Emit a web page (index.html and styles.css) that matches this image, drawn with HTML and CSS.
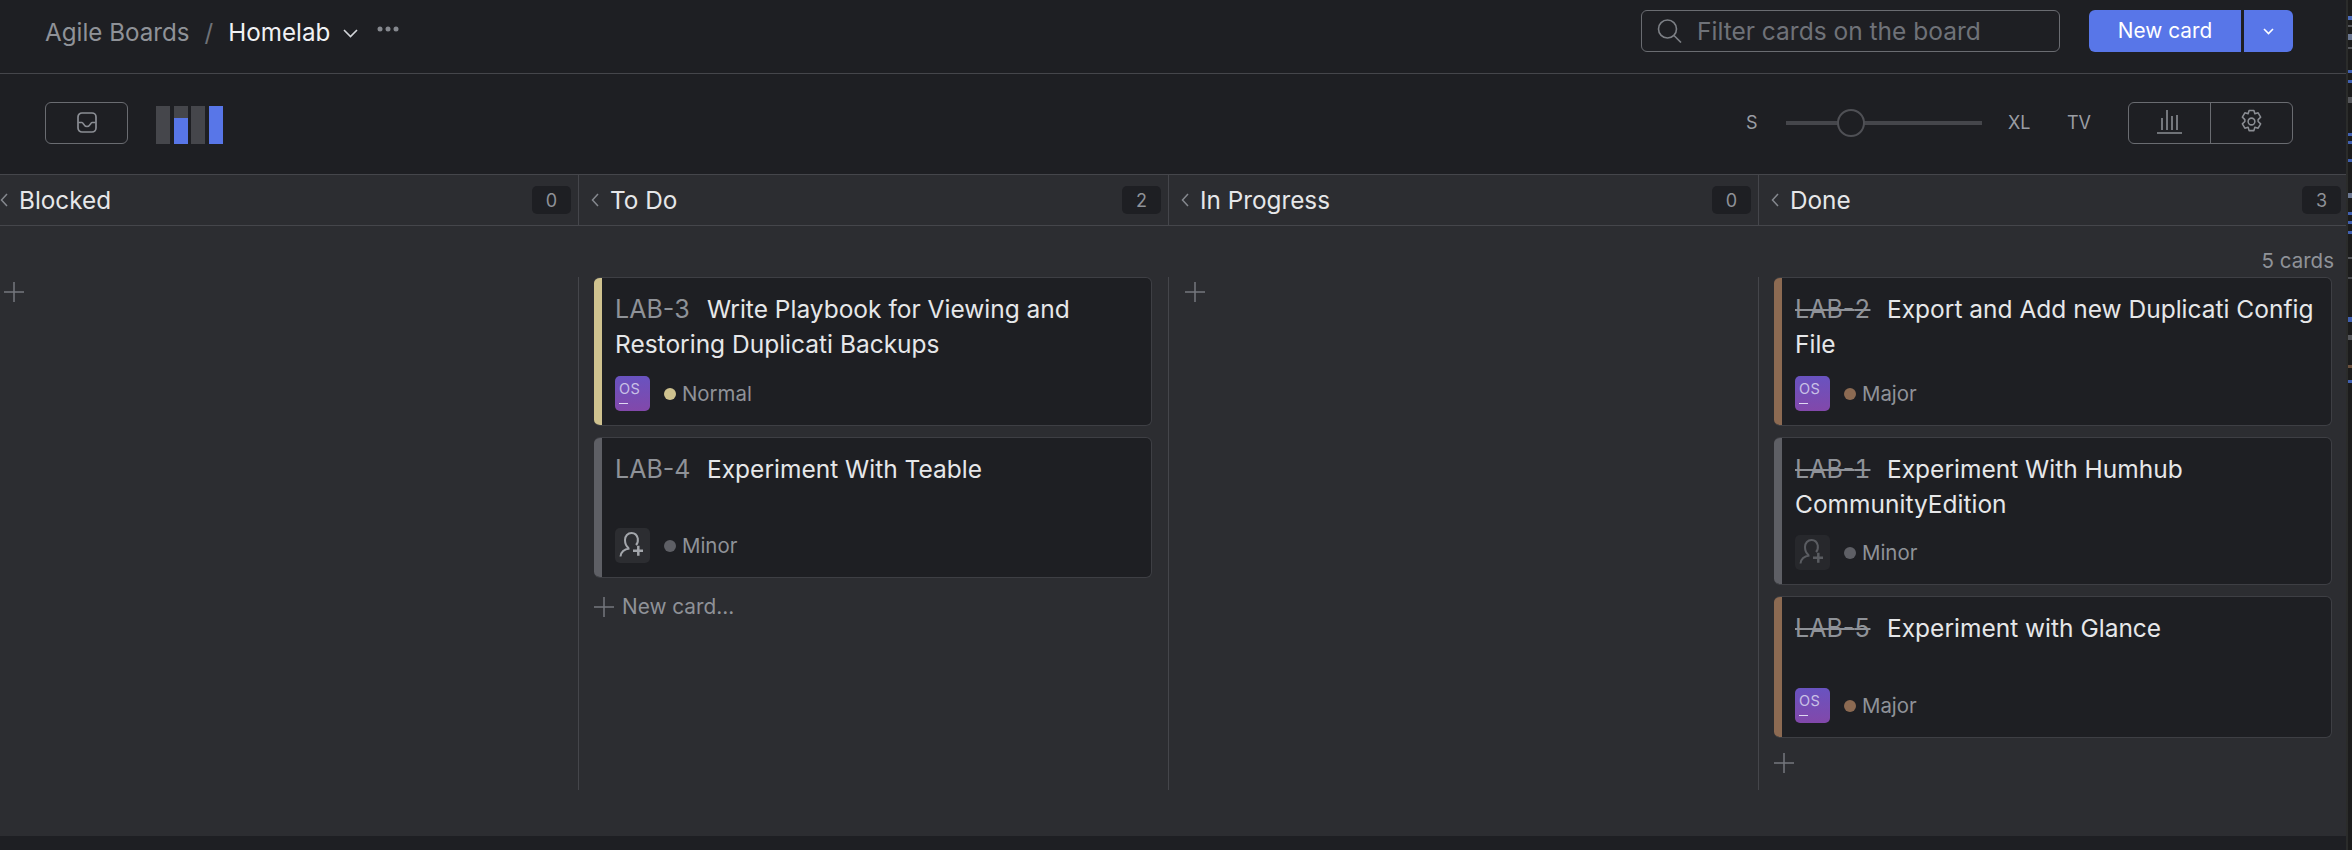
FILE: index.html
```html
<!DOCTYPE html>
<html lang="en">
<head>
<meta charset="utf-8">
<title>Homelab</title>
<link rel="stylesheet" href="styles.css">
</head>
<body>
<div class="app">
  <header class="topbar">
    <nav class="crumbs">
      <span class="crumb-root">Agile Boards</span>
      <span class="crumb-sep">/</span>
      <span class="crumb-current">Homelab</span>
      <svg class="crumb-chev" width="15" height="9" viewBox="0 0 15 9"><path d="M1 1l6.500 6.500L14 1" fill="none" stroke="#d4d6da" stroke-width="1.600"/></svg>
      <svg class="crumb-more" width="22" height="6" viewBox="0 0 22 6"><circle cx="3" cy="3" r="2.500" fill="#85888e"/><circle cx="11" cy="3" r="2.500" fill="#85888e"/><circle cx="19" cy="3" r="2.500" fill="#85888e"/></svg>
    </nav>
    <div class="top-actions">
      <label class="search">
        <svg width="25" height="24" viewBox="0 0 25 24"><circle cx="10.500" cy="10" r="9" fill="none" stroke="#7d8086" stroke-width="1.600"/><path d="m17 16.500 7 7" stroke="#7d8086" stroke-width="1.600"/></svg>
        <span>Filter cards on the board</span>
      </label>
      <div class="split">
        <span class="split-main">New card</span>
        <span class="split-arrow"><svg width="11" height="7" viewBox="0 0 11 7"><path d="M1 1l4.500 4.500L10 1" fill="none" stroke="#fff" stroke-width="1.600"/></svg></span>
      </div>
    </div>
  </header>

  <section class="toolbar">
    <div class="tool-left">
      <button class="icon-btn inbox"><svg width="20" height="21" viewBox="0 0 20 21"><rect x="1" y="1" width="18" height="19" rx="4" fill="none" stroke="#8b8e94" stroke-width="1.700"/><path d="M1.500 10.500H5c1.500 0 1.500 4 5 4s3.500-4 5-4h3.500" fill="none" stroke="#8b8e94" stroke-width="1.700"/></svg></button>
      <div class="mini">
        <i class="mini-bar"></i>
        <i class="mini-bar half"><b></b></i>
        <i class="mini-bar"></i>
        <i class="mini-bar full"></i>
      </div>
    </div>
    <div class="tool-right">
      <span class="size-label s">S</span>
      <div class="slider"><i class="knob"></i></div>
      <span class="size-label xl">XL</span>
      <span class="size-label tv">TV</span>
      <div class="btn-pair">
        <span class="pair-cell"><svg width="25" height="24" viewBox="0 0 25 24"><path d="M5 20V8M10 20V0M15 20V6M20 20V5M0 23h25" fill="none" stroke="#8b8e94" stroke-width="1.600"/></svg></span>
        <span class="pair-cell"><svg width="25" height="25" viewBox="0 0 24 26"><path d="M9.500 1.500h5l1 3.500 3.400-1 2.600 4.500-2.600 2.500v2l2.600 2.500-2.600 4.500-3.400-1-1 3.500h-5l-1-3.500-3.400 1-2.600-4.500 2.600-2.500v-2L2.500 8.500 5.100 4l3.400 1z" fill="none" stroke="#8b8e94" stroke-width="1.600" stroke-linejoin="round"/><circle cx="12" cy="13" r="3.500" fill="none" stroke="#8b8e94" stroke-width="1.600"/></svg></span>
      </div>
    </div>
  </section>

  <section class="board">
    <div class="col-heads">
      <div class="col-head first"><svg class="col-chev" width="8" height="14" viewBox="0 0 8 14"><path d="M7 1 1.500 7 7 13" fill="none" stroke="#85888e" stroke-width="1.500"/></svg><span class="col-name">Blocked</span><span class="col-count">0</span></div>
      <div class="col-head"><svg class="col-chev" width="8" height="14" viewBox="0 0 8 14"><path d="M7 1 1.500 7 7 13" fill="none" stroke="#85888e" stroke-width="1.500"/></svg><span class="col-name">To Do</span><span class="col-count">2</span></div>
      <div class="col-head"><svg class="col-chev" width="8" height="14" viewBox="0 0 8 14"><path d="M7 1 1.500 7 7 13" fill="none" stroke="#85888e" stroke-width="1.500"/></svg><span class="col-name">In Progress</span><span class="col-count">0</span></div>
      <div class="col-head last"><svg class="col-chev" width="8" height="14" viewBox="0 0 8 14"><path d="M7 1 1.500 7 7 13" fill="none" stroke="#85888e" stroke-width="1.500"/></svg><span class="col-name">Done</span><span class="col-count">3</span></div>
    </div>
    <div class="total">5 cards</div>
    <div class="columns">
      <div class="col first">
        <svg class="plus" width="20" height="20" viewBox="0 0 20 20"><path d="M0 10h20M10 0v20" stroke="#74777d" stroke-width="1.500"/></svg>
      </div>
      <div class="col">
        <article class="card normal">
          <div class="card-title"><span class="key">LAB-<span class="num">3</span></span>Write Playbook for Viewing and Restoring Duplicati Backups</div>
          <div class="card-foot"><span class="avatar">OS<i></i></span><span class="dot"></span><span class="prio">Normal</span></div>
        </article>
        <article class="card minor tall-a">
          <div class="card-title"><span class="key">LAB-<span class="num">4</span></span>Experiment With Teable</div>
          <div class="card-foot"><span class="avatar assign"><svg width="35" height="35" viewBox="0 0 35 35"><path d="M13.500 20C11 18 10 15 10 12c0-4 2.800-7 6.500-7 3 0 5.500 2 6.300 5.500.3 2.500-.3 5-1.800 6.500M5.500 28.500c.5-4.500 4-7.500 9-8" fill="none" stroke="#a3a6ab" stroke-width="2"/><path d="M18 22.700h10M23.300 17.700v10" stroke="#a3a6ab" stroke-width="2.500"/></svg></span><span class="dot"></span><span class="prio">Minor</span></div>
        </article>
        <div class="new-card">
          <svg width="20" height="20" viewBox="0 0 20 20"><path d="M0 10h20M10 0v20" stroke="#74777d" stroke-width="1.500"/></svg>
          <span>New card...</span>
        </div>
      </div>
      <div class="col">
        <svg class="plus" width="20" height="20" viewBox="0 0 20 20"><path d="M0 10h20M10 0v20" stroke="#74777d" stroke-width="1.500"/></svg>
      </div>
      <div class="col last">
        <article class="card major">
          <div class="card-title"><span class="key done">LAB-<span class="num">2</span></span>Export and Add new Duplicati Config File</div>
          <div class="card-foot"><span class="avatar">OS<i></i></span><span class="dot"></span><span class="prio">Major</span></div>
        </article>
        <article class="card minor two-line">
          <div class="card-title"><span class="key done">LAB-<span class="num">1</span></span>Experiment With Humhub CommunityEdition</div>
          <div class="card-foot"><span class="avatar assign faded"><svg width="35" height="35" viewBox="0 0 35 35"><path d="M13.500 20C11 18 10 15 10 12c0-4 2.800-7 6.500-7 3 0 5.500 2 6.300 5.500.3 2.500-.3 5-1.800 6.500M5.500 28.500c.5-4.500 4-7.500 9-8" fill="none" stroke="#5a5c61" stroke-width="2"/><path d="M18 22.700h10M23.300 17.700v10" stroke="#5a5c61" stroke-width="2.500"/></svg></span><span class="dot"></span><span class="prio">Minor</span></div>
        </article>
        <article class="card major tall-b">
          <div class="card-title"><span class="key done">LAB-<span class="num">5</span></span>Experiment with Glance</div>
          <div class="card-foot"><span class="avatar">OS<i></i></span><span class="dot"></span><span class="prio">Major</span></div>
        </article>
        <svg class="plus after" width="20" height="20" viewBox="0 0 20 20"><path d="M0 10h20M10 0v20" stroke="#74777d" stroke-width="1.500"/></svg>
      </div>
    </div>
  </section>
  <div class="bottom"></div>
</div>
<div class="strip"></div>
</body>
</html>
```

FILE: styles.css
```css
* { box-sizing: border-box; }
html, body { margin: 0; height: 100%; overflow: hidden; }
body { background: #1e1f23; font-family: Inter, "Liberation Sans", sans-serif; color: #e6e7e9; display: flex; }
.app { width: 2346px; height: 850px; flex: none; display: flex; flex-direction: column; overflow: hidden; }
.strip {
  flex: 1;
  border-left: 2px solid #2b2c2b;
  background: linear-gradient(to bottom,
    #1c1c1c 0 16px, #4a6ab8 16px 20px, #1c1c1c 20px 25px, #55565a 25px 27px, #1c1c1c 27px 34px,
    #6a7690 34px 40px, #1c1c1c 40px 47px, #55565a 47px 49px, #1c1c1c 49px 70px,
    #3f5fb0 70px 73px, #1c1c1c 73px 80px, #3f5fb0 80px 83px, #1c1c1c 83px 97px,
    #55565a 97px 103px, #1c1c1c 103px 133px, #3f5fb0 133px 136px, #1c1c1c 136px 141px,
    #3f5fb0 141px 144px, #1c1c1c 144px 159px, #3f5fb0 159px 162px, #1c1c1c 162px 193px,
    #6a7690 193px 198px, #1c1c1c 198px 212px, #3f5fb0 212px 215px, #1c1c1c 215px 221px,
    #3f5fb0 221px 224px, #1c1c1c 224px 231px, #3f5fb0 231px 234px, #1c1c1c 234px 257px,
    #55565a 257px 259px, #1c1c1c 259px 277px, #4a4b4f 277px 279px, #1c1c1c 279px 317px,
    #3f5fb0 317px 322px, #1c1c1c 322px 335px, #55565a 335px 340px, #1c1c1c 340px 365px,
    #6a4f3c 365px 368px, #1c1c1c 368px 380px, #3f5fb0 380px 383px, #1c1c1c 383px 850px);
}

.topbar { height: 74px; flex: none; border-bottom: 1px solid #45464b; display: flex; align-items: flex-start; justify-content: space-between; padding: 10px 53px 0 45px; }
.crumbs { display: flex; align-items: center; height: 44px; font-size: 24.200px; }
.crumb-root { color: #8f9298; }
.crumb-sep { color: #6f7278; margin: 0 15px; }
.crumb-current { color: #f0f1f3; }
.crumb-chev { margin: 2px 0 0 13px; }
.crumb-more { margin: -6px 0 0 19px; }
.top-actions { display: flex; gap: 29px; }
.search { width: 419px; height: 42px; border: 1px solid #6a6c71; border-radius: 6px; display: flex; align-items: center; gap: 15px; padding: 0 15px; color: #6f7278; font-size: 24.500px; }
.split { display: flex; height: 42px; gap: 3px; color: #fff; font-size: 20.800px; }
.split-main { width: 152px; background: #5876e8; border-radius: 6px 0 0 6px; display: flex; align-items: center; justify-content: center; padding-bottom: 1px; }
.split-arrow { width: 49px; background: #5876e8; border-radius: 0 6px 6px 0; display: flex; align-items: center; justify-content: center; }

.toolbar { height: 101px; flex: none; display: flex; justify-content: space-between; padding: 28px 53px 0 45px; border-bottom: 1px solid #45464b; }
.tool-left { display: flex; gap: 28px; }
.icon-btn { width: 83px; height: 42px; background: none; border: 1.500px solid #6a6c71; border-radius: 6px; display: flex; align-items: center; justify-content: center; padding: 0 0 2px; }
.mini { display: flex; gap: 3.500px; height: 38px; margin-top: 4px; }
.mini-bar { display: block; width: 14px; background: #45464b; }
.mini-bar.half b { display: block; height: 26px; margin-top: 12px; background: #5876e8; }
.mini-bar.full { background: #5876e8; }
.tool-right { display: flex; align-items: flex-start; font-size: 18px; color: #9a9da3; }
.size-label { line-height: 42px; margin-top: 0; }
.s { margin-right: 29px; }
.slider { width: 196px; height: 4px; margin-top: 19px; background: #45464b; position: relative; }
.knob { position: absolute; left: 51px; top: -12px; width: 28px; height: 28px; border-radius: 50%; background: #1e1f23; border: 2px solid #4f5055; }
.xl { margin-left: 25.500px; }
.tv { margin-left: 36.500px; margin-right: 37px; }
.btn-pair { display: flex; width: 165px; height: 42px; border: 1.500px solid #6a6c71; border-radius: 6px; }
.pair-cell { flex: 1; display: flex; align-items: center; justify-content: center; padding-bottom: 3px; }
.pair-cell + .pair-cell { border-left: 1.500px solid #6a6c71; }

.board { height: 661px; flex: none; background: #2c2d31; display: flex; flex-direction: column; }
.col-heads { display: grid; grid-template-columns: 578px 590px 590px 1fr; height: 51px; flex: none; border-bottom: 1px solid #45464b; }
.col-head { display: flex; align-items: center; padding: 0 7px 0 12px; border-left: 1px solid #45464b; }
.col-head.first { border-left: 0; padding-left: 0; }
.col-head.last { padding-right: 5px; }
.col-chev { flex: none; margin-right: 11px; }
.col-name { flex: 1; font-size: 24.300px; color: #e6e7e9; }
.col-count { width: 39px; height: 28px; background: #1e1f23; border-radius: 5px; font-size: 18px; color: #8f9298; display: flex; align-items: center; justify-content: center; }
.total { height: 51px; flex: none; text-align: right; padding: 22px 12px 0 0; font-size: 20.500px; line-height: 26px; color: #8f9298; }
.columns { flex: 1; min-height: 0; display: grid; grid-template-columns: 578px 590px 590px 1fr; padding-bottom: 46px; }
.col { border-left: 1px solid #45464b; padding: 0 16px 0 15px; }
.col.first { border-left: 0; padding-left: 4px; }
.col.last { padding-right: 14px; }
.plus { display: block; margin-top: 5px; }
.col.first .plus { margin-left: 0; }
.col:nth-child(3) .plus { margin-left: 1px; }

.card { position: relative; background: #1e1f23; border: 1px solid #3e3f44; border-left-width: 0; border-radius: 6px; padding: 14px 14px 0 21px; margin-bottom: 11px; overflow: hidden; height: 149px; }
.card::before { content: ""; position: absolute; left: 0; top: 0; bottom: 0; width: 8px; }
.normal::before, .normal .dot { background: #cfc28f; }
.major::before, .major .dot { background: #8c6a52; }
.minor::before, .minor .dot { background: #5e5f65; }
.card-title { font-size: 24.500px; line-height: 35px; height: 70px; color: #e6e7e9; }
.key { display: inline-block; width: 92px; color: #8f9298; font-size: 25px; }
.key.done { text-decoration: line-through; }
.num { font-variant-numeric: tabular-nums; }
.card-foot { display: flex; align-items: center; margin-top: 14px; font-size: 20.400px; color: #8f9298; }
.avatar { position: relative; width: 35px; height: 35px; border-radius: 5px; background: linear-gradient(#6953c0, #8248aa); color: #c9c0e6; font-size: 14.500px; letter-spacing: .3px; padding: 4px 0 0 4px; line-height: 17px; flex: none; display: block; }
.avatar i { position: absolute; left: 4px; bottom: 7px; width: 9px; height: 1px; background: #ded8f0; }
.avatar.assign { background: #2c2d31; padding: 0; }
.avatar.assign svg { display: block; }
.avatar.faded { background: #27282c; }
.dot { width: 12px; height: 12px; border-radius: 50%; margin: 1px 6px 0 14px; }
.tall-a { height: 141px; }
.tall-a .card-foot { margin-top: 6px; }
.two-line { height: 148px; }
.two-line .card-foot { margin-top: 13px; }
.tall-b { height: 142px; }
.tall-b .card-foot { margin-top: 7px; }
.new-card { display: flex; align-items: center; gap: 8px; margin-top: 16px; font-size: 20.800px; color: #8f9298; }
.plus.after { margin-top: 15px; }

.bottom { flex: 1; background: #1e1f23; }
```
